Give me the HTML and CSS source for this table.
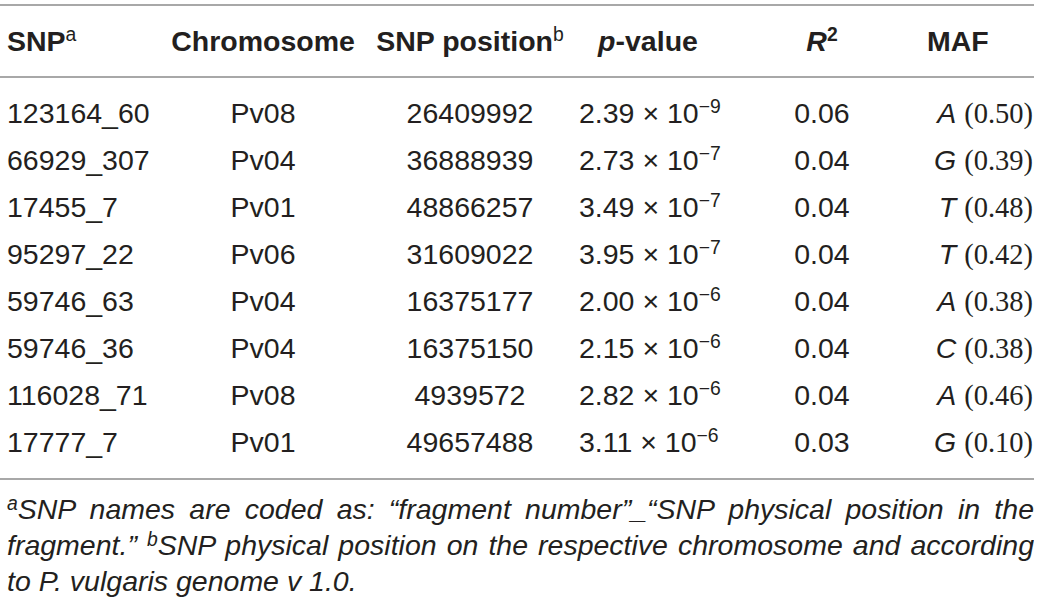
FILE: index.html
```html
<!doctype html>
<html lang="en">
	<head>
	<meta charset="utf-8">
	<title>SNP associations</title>
	<link rel="stylesheet" href="styles.css">
	</head>
	<body>

		<table class="snp-table">
			<colgroup>
				<col class="w-snp">
				<col class="w-chr">
				<col class="w-pos">
				<col class="w-p">
				<col class="w-r">
				<col class="w-maf">
			</colgroup>
			<thead>
				<tr>
					<th class="col-snp">SNP<sup>a</sup></th>
					<th class="col-chr">Chromosome</th>
					<th class="col-pos">SNP position<sup>b</sup></th>
					<th class="col-p"><i>p</i>-value</th>
					<th class="col-r"><i>R</i><sup>2</sup></th>
					<th class="col-maf">MAF</th>
				</tr>
			</thead>
			<tbody>
				<tr>
					<td class="col-snp">123164_60</td>
					<td class="col-chr">Pv08</td>
					<td class="col-pos">26409992</td>
					<td class="col-p">2.39 &times; 10<sup>&minus;9</sup></td>
					<td class="col-r">0.06</td>
					<td class="col-maf"><i>A</i> <span class="freq">(0.50)</span></td>
				</tr>
				<tr>
					<td class="col-snp">66929_307</td>
					<td class="col-chr">Pv04</td>
					<td class="col-pos">36888939</td>
					<td class="col-p">2.73 &times; 10<sup>&minus;7</sup></td>
					<td class="col-r">0.04</td>
					<td class="col-maf"><i>G</i> <span class="freq">(0.39)</span></td>
				</tr>
				<tr>
					<td class="col-snp">17455_7</td>
					<td class="col-chr">Pv01</td>
					<td class="col-pos">48866257</td>
					<td class="col-p">3.49 &times; 10<sup>&minus;7</sup></td>
					<td class="col-r">0.04</td>
					<td class="col-maf"><i>T</i> <span class="freq">(0.48)</span></td>
				</tr>
				<tr>
					<td class="col-snp">95297_22</td>
					<td class="col-chr">Pv06</td>
					<td class="col-pos">31609022</td>
					<td class="col-p">3.95 &times; 10<sup>&minus;7</sup></td>
					<td class="col-r">0.04</td>
					<td class="col-maf"><i>T</i> <span class="freq">(0.42)</span></td>
				</tr>
				<tr>
					<td class="col-snp">59746_63</td>
					<td class="col-chr">Pv04</td>
					<td class="col-pos">16375177</td>
					<td class="col-p">2.00 &times; 10<sup>&minus;6</sup></td>
					<td class="col-r">0.04</td>
					<td class="col-maf"><i>A</i> <span class="freq">(0.38)</span></td>
				</tr>
				<tr>
					<td class="col-snp">59746_36</td>
					<td class="col-chr">Pv04</td>
					<td class="col-pos">16375150</td>
					<td class="col-p">2.15 &times; 10<sup>&minus;6</sup></td>
					<td class="col-r">0.04</td>
					<td class="col-maf"><i>C</i> <span class="freq">(0.38)</span></td>
				</tr>
				<tr>
					<td class="col-snp">116028_71</td>
					<td class="col-chr">Pv08</td>
					<td class="col-pos">4939572</td>
					<td class="col-p">2.82 &times; 10<sup>&minus;6</sup></td>
					<td class="col-r">0.04</td>
					<td class="col-maf"><i>A</i> <span class="freq">(0.46)</span></td>
				</tr>
				<tr>
					<td class="col-snp">17777_7</td>
					<td class="col-chr">Pv01</td>
					<td class="col-pos">49657488</td>
					<td class="col-p">3.11 &times; 10<sup>&minus;6</sup></td>
					<td class="col-r">0.03</td>
					<td class="col-maf"><i>G</i> <span class="freq">(0.10)</span></td>
				</tr>
			</tbody>
		</table>

		<p class="table-note"><sup>a</sup>SNP names are coded as: &ldquo;fragment number&rdquo;_&ldquo;SNP physical position in the fragment.&rdquo; <sup>b</sup>SNP physical position on the respective chromosome and according to P. vulgaris genome v 1.0.</p>

	</body>
</html>
```

FILE: styles.css
```css
body {
	margin: 0;
	padding-top: 4px;
	width: 1034px;
	background: #fff;
	color: #231f20;
	font-family: "Liberation Sans", Arial, sans-serif;
}

.snp-table {
	width: 1034px;
	table-layout: fixed;
	border-collapse: collapse;
	font-size: 28.5px;
}

.w-snp { width: 165px; }
.w-chr { width: 196px; }
.w-pos { width: 218px; }
.w-p { width: 138px; }
.w-r { width: 210px; }
.w-maf { width: 107px; }

.snp-table thead {
	border-top: 2px solid #a8a8a8;
	border-bottom: 2px solid #a8a8a8;
}

.snp-table tbody {
	border-bottom: 2px solid #a8a8a8;
}

.snp-table th {
	height: 70px;
	padding: 0;
	font-weight: bold;
	line-height: 70px;
	white-space: nowrap;
}

.snp-table td {
	height: 47px;
	padding: 0;
	line-height: 47px;
	white-space: nowrap;
}

.snp-table tbody tr:first-child td {
	padding-top: 12px;
}

.snp-table tbody tr:last-child td {
	padding-bottom: 12px;
}

.snp-table sup {
	font-size: 0.68em;
	line-height: 0;
	vertical-align: 0.5em;
}

.snp-table th sup {
	font-weight: normal;
}

.snp-table th.col-r sup {
	font-weight: bold;
}

.col-snp {
	padding-left: 7px !important;
	text-align: left;
}

.col-chr,
.col-pos,
.col-p,
.col-r {
	text-align: center;
}

.col-maf {
	text-align: right;
	padding-right: 1px !important;
}

th.col-maf {
	text-align: left;
}

.freq {
	font-family: "Liberation Serif", "Times New Roman", serif;
}

.table-note {
	margin: 0;
	padding: 11px 0 0 7px;
	font-size: 28.5px;
	font-style: italic;
	line-height: 36px;
	text-align: justify;
}

.table-note sup {
	font-size: 0.68em;
	line-height: 0;
	vertical-align: 0.45em;
}
```
